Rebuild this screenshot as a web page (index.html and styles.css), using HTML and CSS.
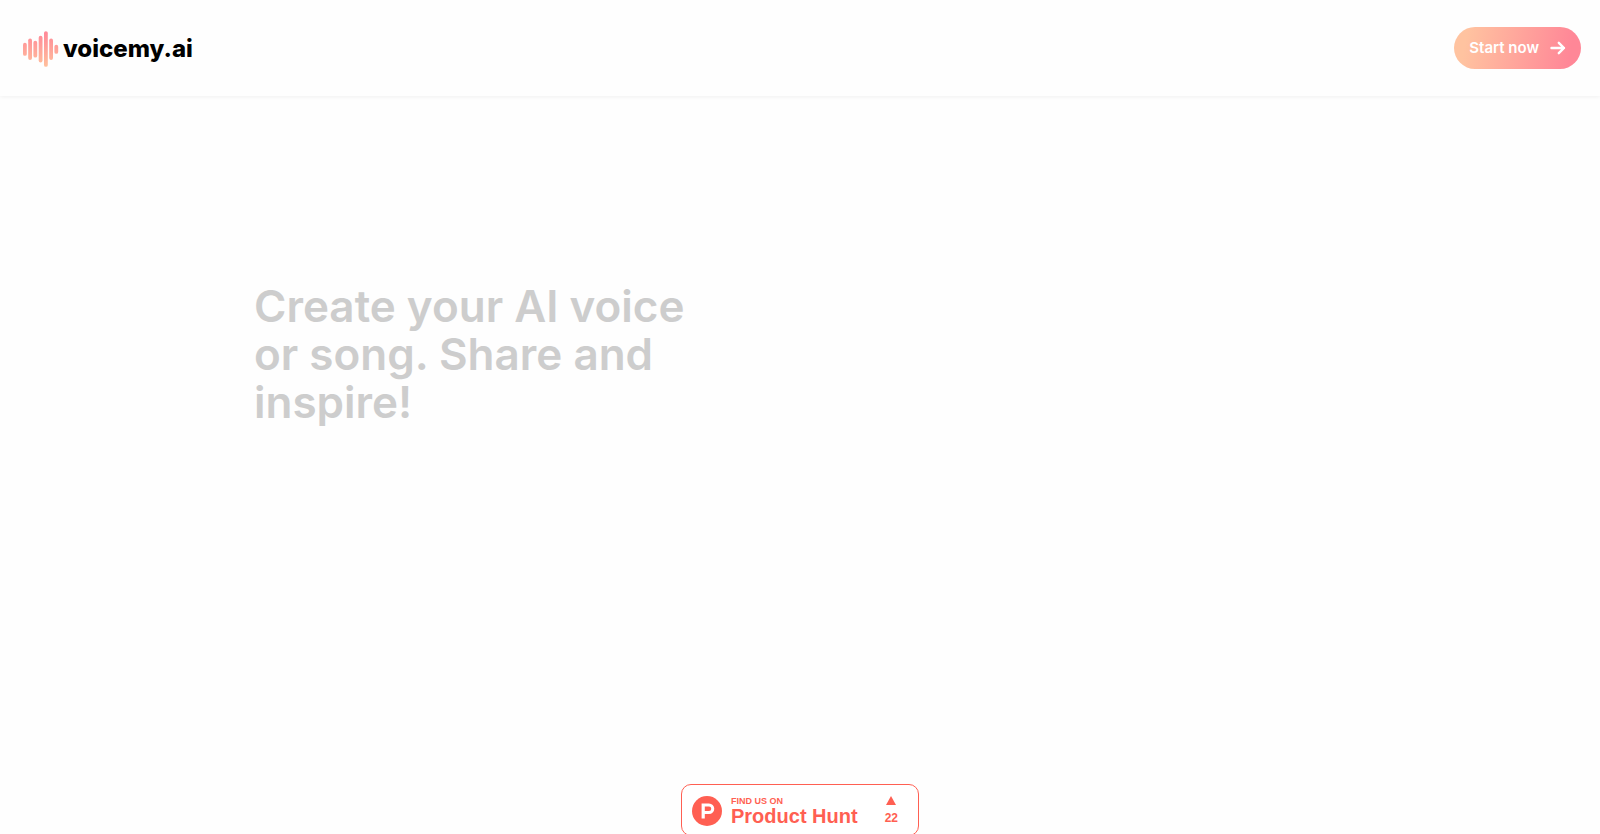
FILE: index.html
```html
<!DOCTYPE html>
<html lang="en">
<head>
  <meta charset="UTF-8" />
  <meta name="viewport" content="width=device-width, initial-scale=1.0"/>
  <title>voicemy.ai</title>
  <link rel="stylesheet" href="styles.css">
</head>
<body>

  <header class="navbar">
    <a href="#" class="brand">
      <svg class="brand-icon" viewBox="0 0 36 36" aria-hidden="true">
        <defs>
          <linearGradient id="wave" gradientUnits="userSpaceOnUse" x1="0" y1="0" x2="0" y2="36">
            <stop offset="0" stop-color="#ff8798"/>
            <stop offset="1" stop-color="#ffc09c"/>
          </linearGradient>
        </defs>
        <g fill="url(#wave)">
          <rect x="0" y="11.8" width="3.8" height="13" rx="1.9"/>
          <rect x="5.2" y="7.4" width="3.8" height="21.6" rx="1.9"/>
          <rect x="10.4" y="9.8" width="3.8" height="16.8" rx="1.9"/>
          <rect x="15.7" y="4.8" width="3.8" height="26.6" rx="1.9"/>
          <rect x="21" y="0.2" width="3.8" height="35.6" rx="1.9"/>
          <rect x="26.2" y="7.4" width="3.8" height="21.6" rx="1.9"/>
          <rect x="31.4" y="13.8" width="3.8" height="9" rx="1.9"/>
        </g>
      </svg>
      <span class="brand-name">voicemy.ai</span>
    </a>
    <button type="button" class="start-button">
      <span>Start now</span>
      <svg class="arrow" viewBox="0 0 16 14" aria-hidden="true">
        <path d="M1.5 7H14M8.8 1.8L14 7L8.8 12.2" fill="none" stroke="#fff" stroke-width="2.4" stroke-linecap="round" stroke-linejoin="round"/>
      </svg>
    </button>
  </header>

  <main class="hero">
    <h1>Create your AI voice or song. Share and inspire!</h1>
  </main>

  <a href="#" class="ph-badge">
    <svg class="ph-logo" viewBox="0 0 30 30" aria-hidden="true">
      <circle cx="15" cy="15" r="15" fill="#ff5f52"/>
      <path d="M12.8 18V22.5H9.6V7.5H17A5.25 5.25 0 0 1 17 18ZM12.8 10.5V15H17A2.25 2.25 0 0 0 17 10.5Z" fill="#fff" fill-rule="evenodd"/>
    </svg>
    <span class="ph-text">
      <span class="ph-small">FIND US ON</span>
      <span class="ph-name">Product Hunt</span>
    </span>
    <span class="ph-votes">
      <svg class="ph-arrow" viewBox="0 0 10 9" aria-hidden="true">
        <path d="M5 0L10 9H0Z" fill="#ff5f52"/>
      </svg>
      <span>22</span>
    </span>
  </a>

</body>
</html>
```
FILE: styles.css
```css
:root {
  --peach: #ffc3a0;
  --pink: #ff8797;
  --ph-red: #ff5f52;
  --title: #cdcdcd;
}

* {
  box-sizing: border-box;
}

body {
  margin: 0;
  font-family: Inter, sans-serif;
  background-color: #fefefe;
}

.navbar {
  display: flex;
  align-items: center;
  justify-content: space-between;
  height: 96px;
  padding: 0 19px 0 23px;
  background: #fefefe;
  box-shadow: 0 1px 4px rgba(0, 0, 0, 0.06);
}

.brand {
  display: flex;
  align-items: center;
  gap: 4px;
  padding-top: 2px;
  color: #000;
  text-decoration: none;
}

.brand-icon {
  width: 36px;
  height: 36px;
}

.brand-name {
  font-size: 24px;
  line-height: 30px;
  font-weight: 800;
}

.start-button {
  display: flex;
  align-items: center;
  gap: 11px;
  height: 42px;
  padding: 0 15px 1px;
  border: none;
  border-radius: 21px;
  background: linear-gradient(100deg, var(--peach) 10%, var(--pink) 90%);
  color: #fff;
  font-family: inherit;
  font-size: 15px;
  font-weight: 600;
  cursor: pointer;
}

.arrow {
  width: 16px;
  height: 14px;
}

.hero {
  max-width: 1140px;
  margin: 0 auto;
  padding: 186px 24px 0;
}

h1 {
  max-width: 480px;
  margin: 0;
  font-size: 44px;
  line-height: 48px;
  font-weight: 600;
  color: var(--title);
}

.ph-badge {
  position: fixed;
  bottom: -2px;
  left: 50%;
  transform: translateX(-50%);
  display: flex;
  align-items: center;
  width: 238px;
  height: 52px;
  padding: 2px 20px 0 10px;
  border: 1px solid var(--ph-red);
  border-radius: 10px;
  background: #fff;
  color: var(--ph-red);
  font-family: "Liberation Sans", Arial, sans-serif;
  font-weight: 700;
  text-decoration: none;
}

.ph-logo {
  width: 30px;
  height: 30px;
}

.ph-text {
  display: flex;
  flex-direction: column;
  margin-left: 9px;
}

.ph-small {
  font-size: 9px;
  line-height: 10px;
}

.ph-name {
  font-size: 20px;
  line-height: 20px;
}

.ph-votes {
  display: flex;
  flex-direction: column;
  align-items: center;
  gap: 5px;
  margin-left: auto;
  font-size: 12px;
  line-height: 16px;
}

.ph-arrow {
  width: 10px;
  height: 9px;
}
```
